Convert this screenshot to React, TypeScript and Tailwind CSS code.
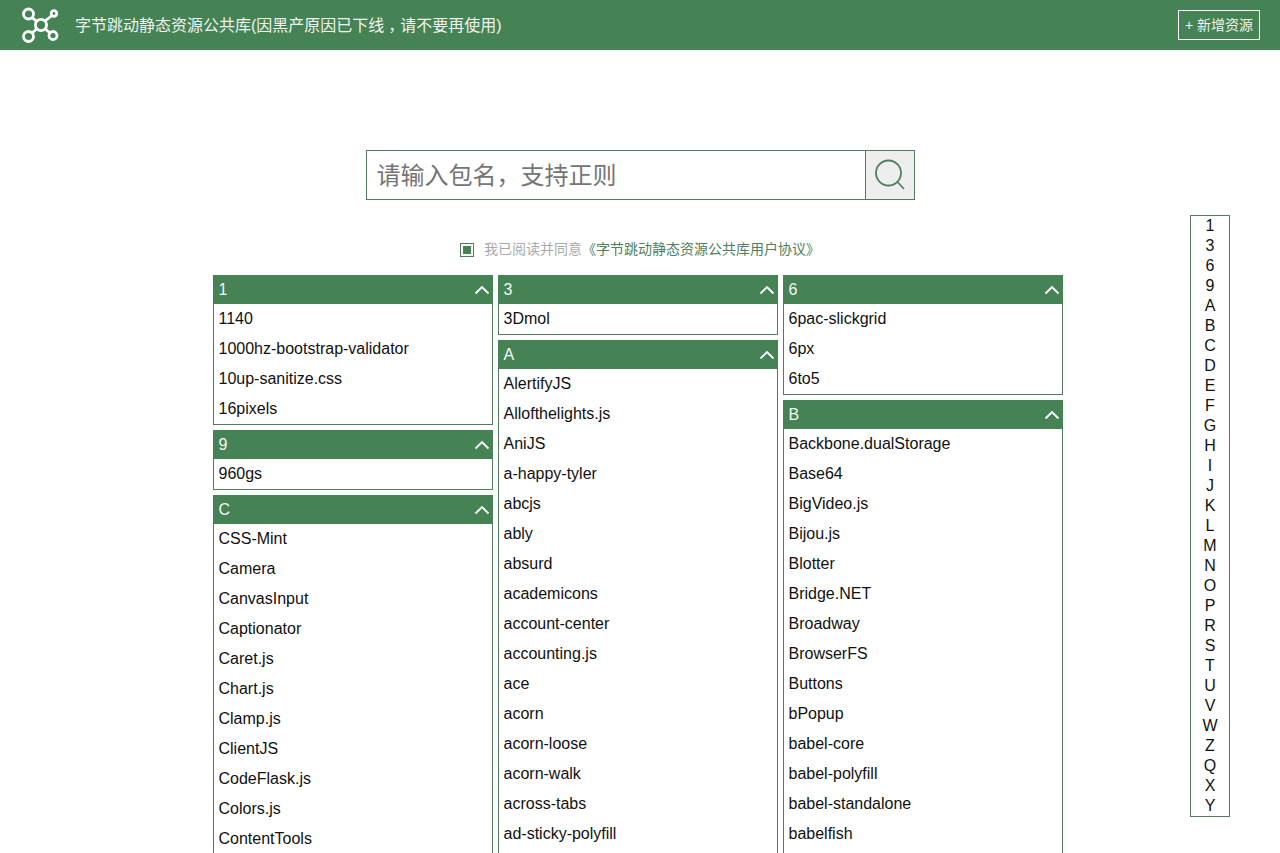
const col1 = [
  { t: "1", items: ["1140", "1000hz-bootstrap-validator", "10up-sanitize.css", "16pixels"] },
  { t: "9", items: ["960gs"] },
  { t: "C", open: true, items: ["CSS-Mint", "Camera", "CanvasInput", "Captionator", "Caret.js", "Chart.js", "Clamp.js", "ClientJS", "CodeFlask.js", "Colors.js", "ContentTools"] },
];
const col2 = [
  { t: "3", items: ["3Dmol"] },
  { t: "A", open: true, items: ["AlertifyJS", "Allofthelights.js", "AniJS", "a-happy-tyler", "abcjs", "ably", "absurd", "academicons", "account-center", "accounting.js", "ace", "acorn", "acorn-loose", "acorn-walk", "across-tabs", "ad-sticky-polyfill"] },
];
const col3 = [
  { t: "6", items: ["6pac-slickgrid", "6px", "6to5"] },
  { t: "B", open: true, items: ["Backbone.dualStorage", "Base64", "BigVideo.js", "Bijou.js", "Blotter", "Bridge.NET", "Broadway", "BrowserFS", "Buttons", "bPopup", "babel-core", "babel-polyfill", "babel-standalone", "babelfish"] },
];
const letters = "1 3 6 9 A B C D E F G H I J K L M N O P R S T U V W Z Q X Y".split(" ");

function Chevron() {
  return (
    <svg width="16" height="10" viewBox="0 0 16 10" fill="none" className="block">
      <path d="M1.5 8.5 L8 2 L14.5 8.5" stroke="#ffffff" strokeWidth="1.9" />
    </svg>
  );
}

function Logo() {
  return (
    <svg width="38" height="36" viewBox="0 0 38 36" fill="none" className="block" stroke="#ffffff" strokeWidth="2.8">
      <circle cx="20" cy="18" r="5.6" />
      <circle cx="7.5" cy="7" r="5" />
      <circle cx="33" cy="6.5" r="2.8" />
      <circle cx="7.5" cy="29.5" r="5" />
      <circle cx="32" cy="28.5" r="4" />
      <path d="M11 10.5 L15.7 14.3 M24 14 L31 8.5 M15.7 22 L11 26 M24.3 22 L29.3 26.2" />
    </svg>
  );
}

function Card({ t, items, open }: { t: string; items: string[]; open?: boolean }) {
  return (
    <section className="w-[280px] mb-[5px] border border-[#557a62] border-t-0">
      <div className="h-[29px] -mx-px bg-[#458254] text-[#f4f7f5] pl-[6px] pr-[3px] leading-[29px] flex items-center justify-between">
        <span>{t}</span>
        <Chevron />
      </div>
      <ul>
        {items.map((i) => (
          <li key={i} className="h-[30px] leading-[30px] pl-[5px] text-[#111111]">{i}</li>
        ))}
        {open && <li className="h-[30px]" aria-hidden="true" />}
      </ul>
    </section>
  );
}

export default function App() {
  return (
    <div className="relative h-[853px] overflow-hidden bg-white text-[16px] font-['Liberation_Sans','Noto_Sans_CJK_SC',sans-serif]">
      <header className="h-[50px] bg-[#458254] flex items-center justify-between pl-[21px] pr-[20px] text-white">
        <div className="flex items-center gap-[16px]">
          <Logo />
          <h1 className="text-[16px] font-normal pt-px text-[#eef3ef]">字节跳动静态资源公共库(因黑产原因已下线<span className="ml-[4px] tracking-[-4px]">，</span>请不要再使用)</h1>
        </div>
        <button className="h-[30px] w-[82px] border border-white text-[14px] text-[#eef3ef] text-center leading-[28px]">+ 新增资源</button>
      </header>

      <div className="mt-[100px] mx-auto w-[549px] h-[50px] flex">
        <input
          placeholder="请输入包名，支持正则"
          className="w-[500px] h-[50px] border border-[#557a62] pl-[10px] pt-[2px] text-[24px] outline-none placeholder:text-[#757575]"
        />
        <button className="w-[50px] h-[50px] -ml-px border border-[#557a62] bg-[#eeeeee] flex items-center justify-center">
          <svg width="32" height="32" viewBox="0 0 32 32" fill="none" stroke="#4f7f5e" strokeWidth="1.8">
            <circle cx="14.5" cy="14" r="12.5" />
            <path d="M23.5 23 L30 30" />
          </svg>
        </button>
      </div>

      <div className="mt-[39px] h-[20px] mb-[16px] flex items-center justify-center gap-[10px] text-[14px]">
        <span className="w-[14px] h-[14px] mt-px border border-[#557a62] flex items-center justify-center">
          <span className="w-[8px] h-[8px] bg-[#458254]" />
        </span>
        <p className="text-[#aaaaaa]">
          我已阅读并同意<a className="text-[#4f7f5e]">《字节跳动静态资源公共库用户协议》</a>
        </p>
      </div>

      <main className="mx-auto w-[855px] flex gap-[5px] pr-[5px]">
        {[col1, col2, col3].map((col, idx) => (
          <div key={idx} className="w-[280px]">
            {col.map((c) => (
              <Card key={c.t} {...c} />
            ))}
          </div>
        ))}
      </main>

      <nav className="absolute left-[1190px] top-[215px] w-[40px] border border-[#557a62] bg-white text-center text-[#111111]">
        {letters.map((l) => (
          <div key={l} className="h-[20px] leading-[20px]">{l}</div>
        ))}
      </nav>
    </div>
  );
}
